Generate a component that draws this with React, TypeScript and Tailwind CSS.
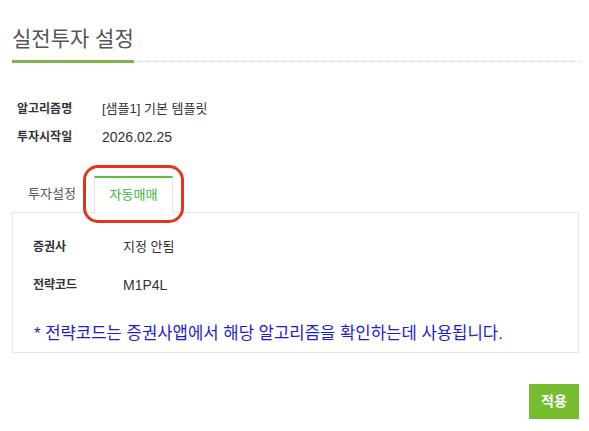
import React from "react";

const font = {
  fontFamily: '"Liberation Sans", "Noto Sans CJK KR", "Noto Sans", sans-serif',
};

export default function App() {
  return (
    <div className="w-[589px] h-[431px] bg-white text-[#333] pt-[25px]" style={font}>
      {/* header */}
      <div className="ml-[12px] w-[568px] border-b border-dotted border-[#cfcfcf]">
        <h1 className="inline-block text-[21px] leading-[28px] pb-[7px] text-[#555] font-normal border-b-[3px] border-[#7ab648] mb-[-2px]">
          실전투자 설정
        </h1>
      </div>

      {/* info rows */}
      <div className="ml-[17px] mt-[33px]">
        <div className="flex items-center h-[28px]">
          <span className="w-[85px] text-[12px] font-bold text-[#333]">알고리즘명</span>
          <span className="text-[13px] text-[#333]">[샘플1] 기본 템플릿</span>
        </div>
        <div className="flex items-center h-[28px]">
          <span className="w-[85px] text-[12px] font-bold text-[#333]">투자시작일</span>
          <span className="text-[14px] text-[#333]">2026.02.25</span>
        </div>
      </div>

      {/* tabs */}
      <div className="ml-[12px] w-[567px] mt-[25px]">
        <div className="relative flex gap-[2px] h-[36px]">
          <div className="w-[80px] h-[36px] flex items-center justify-center text-[13px] text-[#555]">
            투자설정
          </div>
          <div className="w-[79px] h-[37px] flex items-center justify-center text-[13px] text-[#3db83d] bg-white border-t-2 border-x border-t-[#5cbf3a] border-x-[#e3e3e3] relative z-10 pb-[1px]">
            자동매매
          </div>
          <div className="absolute left-[71px] top-[-11px] w-[101px] h-[58px] border-[3px] border-[#e5341c] rounded-[15px] z-20 pointer-events-none" />
        </div>

        <div className="border border-[#e6e6e6] pt-[20px] pb-[4px] pl-[20px]">
          <div className="flex items-center h-[28px]">
            <span className="w-[90px] text-[12px] font-bold text-[#333]">증권사</span>
            <span className="text-[13px] text-[#333]">지정 안됨</span>
          </div>
          <div className="flex items-center h-[28px] mt-[10px]">
            <span className="w-[90px] text-[12px] font-bold text-[#333]">전략코드</span>
            <span className="text-[14px] text-[#333]">M1P4L</span>
          </div>
          <div className="mt-[21px] leading-[28px] text-[16.7px] text-[#1c1cd8] pl-[1px]">
            * 전략코드는 증권사앱에서 해당 알고리즘을 확인하는데 사용됩니다.
          </div>
        </div>

        <div className="flex justify-end mt-[31px]">
          <button className="w-[50px] h-[35px] bg-[#76bc2f] text-white text-[14px] font-semibold">
            적용
          </button>
        </div>
      </div>
    </div>
  );
}
